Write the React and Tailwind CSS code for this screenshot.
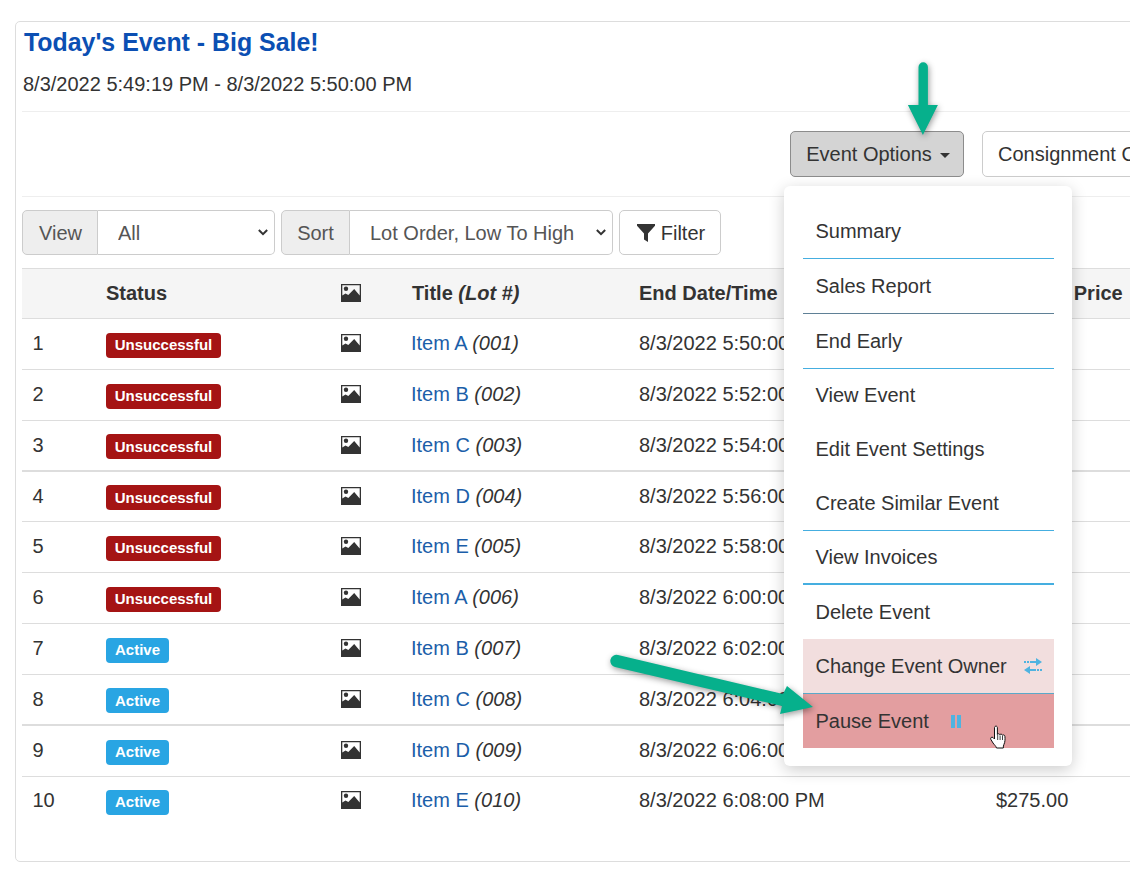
import React from "react";

const rows = [
  ["1", "Unsuccessful", "Item A", "001", "8/3/2022 5:50:00 PM", "", "h-[51px]"],
  ["2", "Unsuccessful", "Item B", "002", "8/3/2022 5:52:00 PM", "", "h-[51px]"],
  ["3", "Unsuccessful", "Item C", "003", "8/3/2022 5:54:00 PM", "", "h-[51px]"],
  ["4", "Unsuccessful", "Item D", "004", "8/3/2022 5:56:00 PM", "", "h-[50px]"],
  ["5", "Unsuccessful", "Item E", "005", "8/3/2022 5:58:00 PM", "", "h-[51px]"],
  ["6", "Unsuccessful", "Item A", "006", "8/3/2022 6:00:00 PM", "", "h-[51px]"],
  ["7", "Active", "Item B", "007", "8/3/2022 6:02:00 PM", "", "h-[51px]"],
  ["8", "Active", "Item C", "008", "8/3/2022 6:04:00 PM", "", "h-[51px]"],
  ["9", "Active", "Item D", "009", "8/3/2022 6:06:00 PM", "", "h-[51px]"],
  ["10", "Active", "Item E", "010", "8/3/2022 6:08:00 PM", "$275.00", "h-[48px]"],
];

const menu = [
  ["Summary", "h-[55px] border-b border-[#45aee0]"],
  ["Sales Report", "h-[55px] border-b border-[#5f8096]"],
  ["End Early", "h-[55px] border-b border-[#45aee0]"],
  ["View Event", "h-[54px] pb-[2px]"],
  ["Edit Event Settings", "h-[54px] pb-[2px]"],
  ["Create Similar Event", "h-[54px] border-b border-[#45aee0] pb-px"],
  ["View Invoices", "h-[54px] border-b-2 border-[#45aee0]"],
  ["Delete Event", "h-[54px]"],
];

function PictureIcon({ className }) {
  return (
    <svg viewBox="0 0 20 18" className={className} aria-hidden="true">
      <path fill="#333" fillRule="evenodd" d="M0 0h20v18H0zM1.300 1.300v10.200l3.200-2 2.800 1.500L13.200 5l5.500 6.500V1.300z" />
      <circle cx="5" cy="4.800" r="2.200" fill="#333" />
    </svg>
  );
}

function Chevron() {
  return (
    <svg viewBox="0 0 12 8" className="pointer-events-none absolute right-[7px] top-[19px] h-[7px] w-[10px]" aria-hidden="true">
      <path fill="none" stroke="#333" strokeWidth="2.400" d="M1 1l5 5 5-5" />
    </svg>
  );
}

function Caret() {
  return <span className="ml-[8px] mt-[3px] h-0 w-0 border-x-[5px] border-t-[5px] border-x-transparent border-t-[#333]" />;
}

export default function App() {
  return (
    <div className="relative h-[878px] w-[1130px] overflow-hidden bg-white pl-[15px] pt-[21px] font-['Liberation_Sans',Arial,sans-serif] text-[20px] text-[#333]">
      <div className="h-[841px] w-[1300px] rounded-[5px] border border-[#ddd] pl-[6px]">
        <div className="h-[90px] border-b border-[#eee]">
          <h1 className="pl-[2px] pt-[2px] text-[24.9px] font-bold leading-[37px] text-[#0b4fb3]">Today's Event - Big Sale!</h1>
          <p className="pl-px pt-[9px] text-[20px] leading-[28px]">8/3/2022 5:49:19 PM - 8/3/2022 5:50:00 PM</p>
        </div>

        <div className="flex h-[85px] items-start gap-[18px] border-b border-[#eee] pl-[768px] pt-[19px]">
          <button className="flex h-[46px] w-[174px] items-center justify-center rounded-[5px] border border-[#8c8c8c] bg-[#d4d4d4] pl-[2px] text-[20px]">
            Event Options
            <Caret />
          </button>
          <button className="flex h-[46px] w-[240px] items-center justify-start whitespace-nowrap rounded-[5px] border border-[#ccc] bg-white pl-[15px] text-[20px]">
            Consignment Options
            <Caret />
          </button>
        </div>

        <div className="flex gap-[6px] pt-[13px]">
          <div className="flex h-[45px] w-[253px]">
            <span className="flex w-[76px] items-center justify-center rounded-l-[5px] border border-[#ccc] bg-[#eee] pl-px text-[#555]">View</span>
            <div className="relative flex-1">
              <select defaultValue="All" className="h-full w-full appearance-none rounded-r-[5px] border border-l-0 border-[#ccc] bg-white pl-[20px] text-[20px] text-[#555]">
                <option>All</option>
              </select>
              <Chevron />
            </div>
          </div>
          <div className="flex h-[45px] w-[332px]">
            <span className="flex w-[69px] items-center justify-center rounded-l-[5px] border border-[#ccc] bg-[#eee] text-[#555]">Sort</span>
            <div className="relative flex-1">
              <select defaultValue="Lot" className="h-full w-full appearance-none rounded-r-[5px] border border-l-0 border-[#ccc] bg-white pl-[20px] text-[20px] text-[#555]">
                <option value="Lot">Lot Order, Low To High</option>
              </select>
              <Chevron />
            </div>
          </div>
          <button className="flex h-[45px] w-[102px] items-center justify-center gap-[6px] rounded-[5px] border border-[#ccc] bg-white pl-[2px]">
            <svg viewBox="0 0 18 18" className="h-[18px] w-[18px]" aria-hidden="true">
              <path fill="#333" d="M0 0h18v1.800L11 9.500V18l-4-2.600V9.500L0 1.800z" />
            </svg>
            Filter
          </button>
        </div>

        <div className="mt-[13px] grid h-[51px] grid-cols-[84px_235px_70px_228px_357px_1fr] items-center border-y border-[#ddd] bg-[#f5f5f5] pb-px font-bold">
          <span />
          <span>Status</span>
          <PictureIcon className="h-[18px] w-[20px]" />
          <span className="pl-px">
            Title <em>(Lot #)</em>
          </span>
          <span>End Date/Time</span>
          <span>Current Price</span>
        </div>

        {rows.map(([n, status, title, lot, date, price, h], i) => (
          <div
            key={n}
            className={`grid grid-cols-[84px_235px_70px_228px_357px_1fr] items-center pb-[2px] ${h} ${
              i === 9 ? "" : i === 2 || i === 7 ? "border-b-2 border-[#ddd]" : "border-b border-[#ddd]"
            }`}
          >
            <span className="pl-[10.500px]">{n}</span>
            <span>
              <span
                className={`inline-flex h-[25px] items-center justify-center rounded-[4px] text-[15px] font-bold text-white ${
                  status === "Active" ? "w-[63px] bg-[#29a5e3]" : "w-[115px] bg-[#a51414]"
                }`}
              >
                {status}
              </span>
            </span>
            <PictureIcon className="h-[18px] w-[20px]" />
            <span>
              <a className="text-[#1b5ea9]">{title}</a> <em>({lot})</em>
            </span>
            <span>{date}</span>
            <span>{price}</span>
          </div>
        ))}
      </div>

      <div className="absolute left-[784px] top-[186px] h-[580px] w-[288px] rounded-[6px] bg-white pl-[19px] pr-[18px] pt-[18px] shadow-[0_4px_16px_rgba(0,0,0,0.2)]">
        {menu.map(([label, cls]) => (
          <div key={label} className={`flex items-center pl-[12.500px] ${cls}`}>
            {label}
          </div>
        ))}
        <div className="flex h-[54px] items-center justify-between bg-[#f2dede] pl-[12.500px] pr-[12px]">
          Change Event Owner
          <svg viewBox="0 0 18 16" className="h-[16px] w-[18px]" aria-hidden="true">
            <path fill="#4fb3e0" d="M0 3h2v2H0zM3 3h2v2H3zM6 3h6V0l6 4-6 4V5H6zM18 11h-2v2h2zM15 11h-2v2h2zM12 11H6V8l-6 4 6 4v-3h6z" />
          </svg>
        </div>
        <div className="flex h-[55px] items-center gap-[22px] border-t border-[#5aa9c9] bg-[#e39ea0] pl-[12.500px]">
          Pause Event
          <svg viewBox="0 0 10 13" className="h-[13px] w-[10px]" aria-hidden="true">
            <path fill="#4fb3e0" d="M0 0h4v13H0zM6 0h4v13H6z" />
          </svg>
        </div>
      </div>

      <svg viewBox="0 0 1130 878" className="pointer-events-none absolute left-0 top-0 h-[878px] w-[1130px] drop-shadow-[1px_2px_3px_rgba(0,0,0,0.4)]" aria-hidden="true">
        <path fill="#06b08c" d="M918.500 67a4.700 4.700 0 0 1 9.400 0v38h10l-15 30-15-30h10.600z" />
        <path fill="#06b08c" d="M618 655L783 694L787 686L813 707L780 714L782 706L615 667a6 6 0 0 1 3-12z" />
      </svg>

      <svg viewBox="0 0 18 24" className="absolute left-[990px] top-[725px] h-[24px] w-[18px]" aria-hidden="true">
        <path
          fill="#fff"
          stroke="#111"
          strokeWidth="1"
          strokeLinejoin="round"
          d="M5 1.500c1-.8 2.200-.3 2.400 1v7c.3-1 2.300-1 2.500.3.500-1 2.300-.8 2.500.5.600-.8 2.400-.5 2.500 1 .3 2.500.2 6-1 8.200-.5 1-.6 2-.6 3.500H6.500c-.6-2-2-3-3.500-5L.8 14.300c-.7-1.500 1-2.800 2.200-1.800l1.500 1.500V2.500c0-.4.200-.8.500-1z"
        />
        <path stroke="#111" strokeWidth="0.8" d="M7.700 10v5M10.100 10.500v4.500M12.500 11v4" />
      </svg>
    </div>
  );
}
